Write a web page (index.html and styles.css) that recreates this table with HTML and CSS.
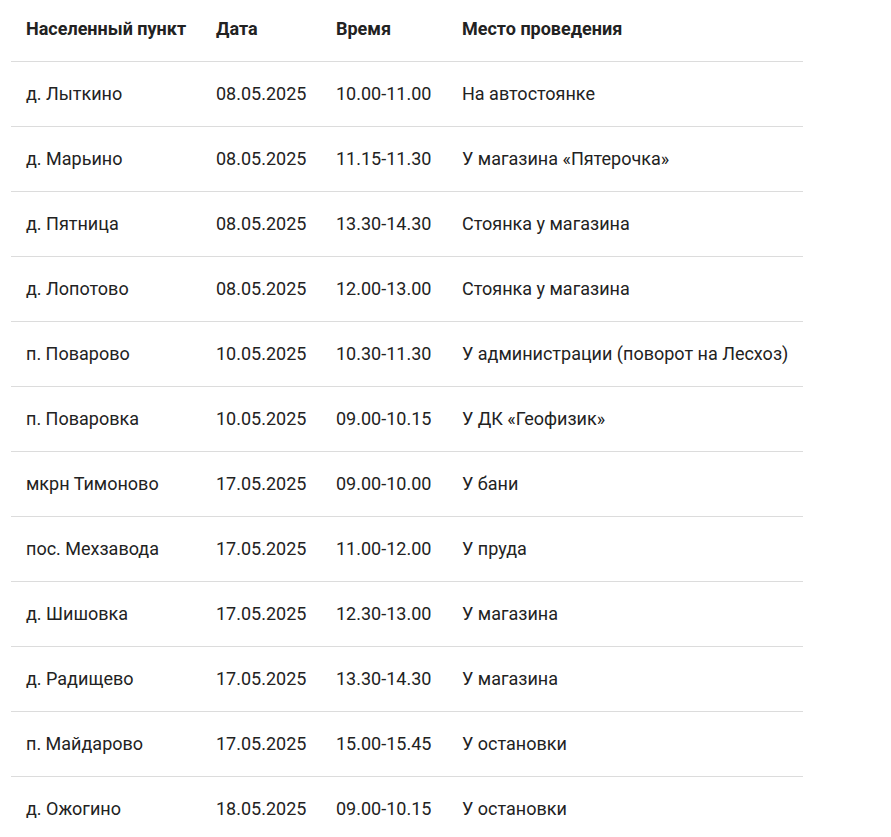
FILE: index.html
```html
<!DOCTYPE html>
<html lang="ru">
<head>
<meta charset="utf-8">
<link rel="stylesheet" href="styles.css">
</head>
<body>
<div class="wrap">
<table class="schedule">
  <colgroup>
    <col class="c1"><col class="c2"><col class="c3"><col class="c4">
  </colgroup>
  <thead>
    <tr><th>Населенный пункт</th><th>Дата</th><th>Время</th><th>Место проведения</th></tr>
  </thead>
  <tbody>
    <tr><td>д. Лыткино</td><td>08.05.2025</td><td>10.00-11.00</td><td>На автостоянке</td></tr>
    <tr><td>д. Марьино</td><td>08.05.2025</td><td>11.15-11.30</td><td>У магазина «Пятерочка»</td></tr>
    <tr><td>д. Пятница</td><td>08.05.2025</td><td>13.30-14.30</td><td>Стоянка у магазина</td></tr>
    <tr><td>д. Лопотово</td><td>08.05.2025</td><td>12.00-13.00</td><td>Стоянка у магазина</td></tr>
    <tr><td>п. Поварово</td><td>10.05.2025</td><td>10.30-11.30</td><td>У администрации (поворот на Лесхоз)</td></tr>
    <tr><td>п. Поваровка</td><td>10.05.2025</td><td>09.00-10.15</td><td>У ДК «Геофизик»</td></tr>
    <tr><td>мкрн Тимоново</td><td>17.05.2025</td><td>09.00-10.00</td><td>У бани</td></tr>
    <tr><td>пос. Мехзавода</td><td>17.05.2025</td><td>11.00-12.00</td><td>У пруда</td></tr>
    <tr><td>д. Шишовка</td><td>17.05.2025</td><td>12.30-13.00</td><td>У магазина</td></tr>
    <tr><td>д. Радищево</td><td>17.05.2025</td><td>13.30-14.30</td><td>У магазина</td></tr>
    <tr><td>п. Майдарово</td><td>17.05.2025</td><td>15.00-15.45</td><td>У остановки</td></tr>
    <tr><td>д. Ожогино</td><td>18.05.2025</td><td>09.00-10.15</td><td>У остановки</td></tr>
  </tbody>
</table>
</div>
</body>
</html>
```

FILE: styles.css
```css
html, body {
  margin: 0;
  padding: 0;
  background: #fff;
}
body {
  font-family: Roboto, "Noto Sans", Arial, sans-serif;
  color: #222;
  font-size: 18px;
}
.wrap {
  padding-left: 11px;
}
.schedule {
  width: 792px;
  border-collapse: collapse;
  table-layout: fixed;
}
.c1 { width: 190px; }
.c2 { width: 120px; }
.c3 { width: 126px; }
.c4 { width: 356px; }
.schedule th {
  font-weight: 700;
  font-size: 18px;
  text-align: left;
  height: 61px;
  padding: 0 15px 3px;
  box-sizing: border-box;
  vertical-align: middle;
  white-space: nowrap;
}
.schedule thead tr {
  border-bottom: 1px solid #dcdcdc;
}
.schedule td {
  height: 65px;
  padding: 0 15px;
  box-sizing: border-box;
  vertical-align: middle;
  white-space: nowrap;
}
.schedule tbody tr {
  border-bottom: 1px solid #dcdcdc;
}
.schedule tbody tr:last-child {
  border-bottom: none;
}
```
